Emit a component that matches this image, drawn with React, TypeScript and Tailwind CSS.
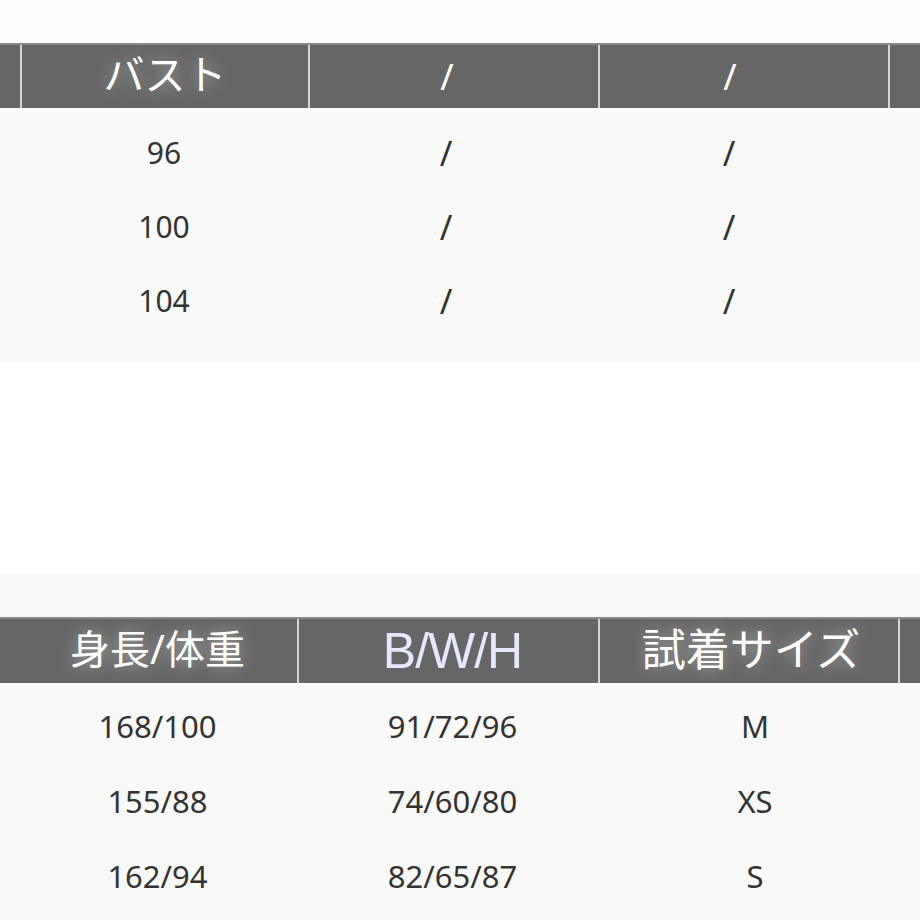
import React from "react";

const font = "font-['Noto_Sans','Noto_Sans_CJK_JP',sans-serif]";
const glow = "[text-shadow:0_0_16px_rgba(255,255,255,0.45)]";

function TopTable() {
  const rows = ["96", "100", "104"];
  return (
    <div className="bg-[#fafafa]">
      <div className="flex h-[65px] bg-[#666666] border-t-2 border-[#8a8a8a]">
        <div className="w-[20px]" />
        <div className={`w-[288px] border-l-2 border-[#d4d4d4] flex items-center justify-center text-white text-[41px] leading-none pb-1 ${glow}`}>バスト</div>
        <div className="w-[290px] border-l-2 border-[#d4d4d4] flex items-center justify-center pr-[14px] text-white text-[36px] leading-none">/</div>
        <div className="w-[290px] border-l-2 border-[#d4d4d4] flex items-center justify-center pr-[28px] text-white text-[36px] leading-none">/</div>
        <div className="flex-1 border-l-2 border-[#d4d4d4]" />
      </div>
      <div className="pt-2 pb-6">
        {rows.map((r) => (
          <div key={r} className="flex h-[74px] text-[#333333] text-[30px] leading-none">
            <div className="w-[20px]" />
            <div className="w-[288px] flex items-center justify-center">{r}</div>
            <div className="w-[290px] flex items-center justify-center pr-[14px] text-[34px]">/</div>
            <div className="w-[290px] flex items-center justify-center pr-[28px] text-[34px]">/</div>
            <div className="flex-1" />
          </div>
        ))}
      </div>
    </div>
  );
}

function BottomTable() {
  const rows = [
    ["168/100", "91/72/96", "M"],
    ["155/88", "74/60/80", "XS"],
    ["162/94", "82/65/87", "S"],
  ];
  return (
    <div className="bg-[#f9f9f9] pt-[43px]">
      <div className="flex h-[66px] bg-[#666666] border-t-2 border-[#8a8a8a]">
        <div className={`w-[297px] pl-[18px] flex items-center justify-center text-white text-[40px] leading-none pb-1 ${glow}`}>身長/体重</div>
        <div className="w-[301px] border-l-2 border-[#d4d4d4] flex items-center justify-center pl-[8px] text-[#e6e8ff] text-[50px] leading-none font-['Liberation_Sans',sans-serif] tracking-[-1px]">B/W/H</div>
        <div className={`w-[300px] border-l-2 border-[#d4d4d4] flex items-center justify-center pl-[4px] text-white text-[44px] leading-none pb-1 ${glow}`}>試着サイズ</div>
        <div className="flex-1 border-l-2 border-[#d4d4d4]" />
      </div>
      <div className="pt-[6px] pb-4">
        {rows.map((r) => (
          <div key={r[0]} className="flex h-[75px] text-[#333333] text-[31px] leading-none">
            <div className="w-[297px] pl-[18px] flex items-center justify-center">{r[0]}</div>
            <div className="w-[301px] pl-[10px] flex items-center justify-center">{r[1]}</div>
            <div className="w-[300px] pl-[14px] flex items-center justify-center">{r[2]}</div>
            <div className="flex-1" />
          </div>
        ))}
      </div>
    </div>
  );
}

export default function App() {
  return (
    <div className={`w-[920px] h-[920px] overflow-hidden bg-white ${font}`}>
      <div className="h-[43px] bg-[#fdfdfd]" />
      <TopTable />
      <div className="h-[212px] bg-white" />
      <BottomTable />
    </div>
  );
}
